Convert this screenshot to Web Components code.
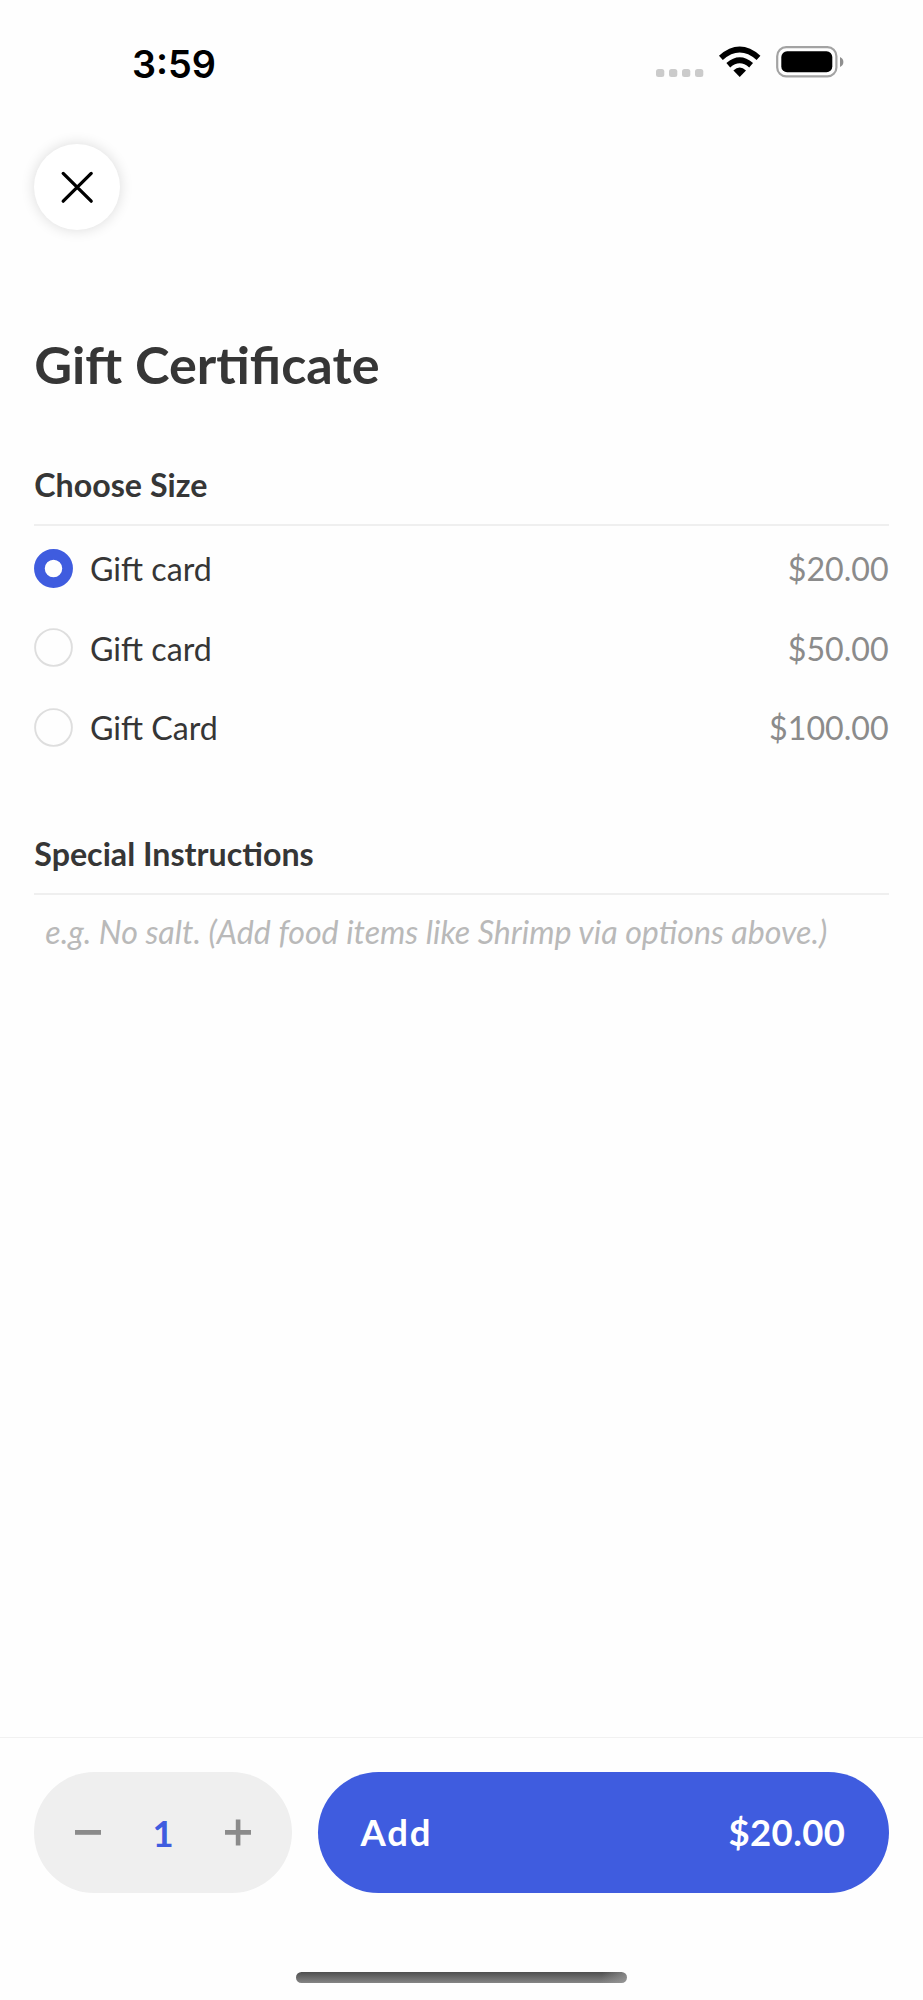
<!DOCTYPE html>
<html lang="en">
<head>
<meta charset="utf-8">
<title>Gift Certificate</title>
<style>
html,body{margin:0;height:2000px;background:#fefefe}
body{font-family:Lato,sans-serif;color:#363636;overflow:hidden}
</style>
</head>
<body>
<item-screen></item-screen>
<script>
function define(name, html) {
  const t = document.createElement('template');
  t.innerHTML = html;
  customElements.define(name, class extends HTMLElement {
    constructor() {
      super();
      this.attachShadow({mode: 'open'}).appendChild(t.content.cloneNode(true));
    }
  });
}

define('status-bar', `
<style>
:host{display:flex;height:144px;justify-content:space-between;align-items:flex-start;box-sizing:border-box;padding:40px 79.5px 0 132px;color:#000}
.time{padding-top:1px;font:600 37.8px/46px Inter,sans-serif}
svg{display:block}
</style>
<span class="time"><slot></slot></span>
<svg width="190" height="46" viewBox="653 40 190 46">
  <g fill="#cbcbcb"><rect x="655" y="69" width="8.3" height="8" rx="2.5"/><rect x="668" y="69" width="8.3" height="8" rx="2.5"/><rect x="681" y="69" width="8.3" height="8" rx="2.5"/><rect x="694" y="69" width="8.3" height="8" rx="2.5"/></g>
  <path d="M738.7 77 L732.4 70.4 Q738.7 64.8 745 70.4Z"/>
  <path d="M727.3 65.2 Q738.7 55.2 750.1 65.2" fill="none" stroke="#000" stroke-width="5.8"/>
  <path d="M719.9 57.8 Q738.7 41.2 757.5 57.8" fill="none" stroke="#000" stroke-width="5.8"/>
  <rect x="776.2" y="47.2" width="59.2" height="29.2" rx="9" fill="none" stroke="#a3a3a3" stroke-width="2.2"/>
  <rect x="780.3" y="51.3" width="51" height="21" rx="5.8"/>
  <path d="M839 57 Q842.4 58.6 842.4 62 Q842.4 65.4 839 67Z" fill="#8f8f8f"/>
</svg>`);

define('close-button', `
<style>
:host{display:flex;width:86px;height:86px;border-radius:50%;background:#fff;box-shadow:0 0 14px rgba(0,0,0,.14);align-items:center;justify-content:center}
svg{display:block}
</style>
<svg width="34" height="34" viewBox="0 0 34 34"><path d="M3.2 3.4 31.2 31.2M31.2 3.4 3.2 31.2" stroke="#000" stroke-width="3.3" stroke-linecap="round"/></svg>`);

define('section-heading', `
<style>:host{display:block;height:40px;padding-bottom:20px;border-bottom:2px solid #efefef;font-size:32.2px;font-weight:700;line-height:42px}</style>
<slot></slot>`);

define('option-row', `
<style>
:host{display:flex;height:79.4px;align-items:center;font-size:32.2px;line-height:40px}
svg{display:block;margin-right:16.6px}
circle{fill:none;stroke:#dedede;stroke-width:1.9;r:18.4px}
:host([checked]) circle{stroke:#3f5cdf;stroke-width:10.7;r:14.1px}
.label{flex:1;padding-top:2px}
.price{padding-top:2px;color:#8b8b8b}
</style>
<svg width="39" height="39" viewBox="0 0 39 39"><circle cx="19.5" cy="19.5"/></svg>
<span class="label"><slot></slot></span><span class="price"><slot name="price"></slot></span>`);

define('quantity-stepper', `
<style>
:host{display:flex;box-sizing:border-box;width:257.6px;height:120.6px;border-radius:61px;background:#efefef;align-items:center;justify-content:space-between;padding:0 40.5px;font-size:36.5px;font-weight:700;color:#3f5cdf}
svg{display:block}
span{padding-top:2px}
</style>
<svg width="26" height="26"><path d="M0 13.4H26" stroke="#8b8b8b" stroke-width="4.8"/></svg>
<span><slot></slot></span>
<svg width="26" height="27"><path d="M0 13.4H26M13.1 .4V26.4" stroke="#8b8b8b" stroke-width="4.6"/></svg>`);

define('add-button', `
<style>
:host{display:flex;flex:1;box-sizing:border-box;height:120.6px;border-radius:61px;background:#3f5cdf;align-items:center;justify-content:space-between;padding:0 43.5px 0 43px;font-size:36.5px;font-weight:700;color:#fff}
.action{letter-spacing:1.8px}
.total{letter-spacing:.35px}
</style>
<span class="action"><slot></slot></span><span class="total"><slot name="total"></slot></span>`);

define('bottom-bar', `
<style>
:host{display:flex;flex-direction:column;box-sizing:border-box;height:263px;margin-top:auto;border-top:1px solid #f1f1f1;align-items:center}
.row{display:flex;align-self:stretch;gap:25.7px;padding:34.2px 34.3px 0}
.home{width:330.5px;height:11px;border-radius:6px;margin-top:79.2px;background:linear-gradient(100deg,transparent 92%,#a0a0a0aa),linear-gradient(#4e4e4e,#858585)}
</style>
<div class="row"><slot></slot></div><div class="home"></div>`);

define('item-screen', `
<style>
:host{display:flex;flex-direction:column;height:2000px}
main{padding:0 34.3px}
h1{margin:103px 0 69px;font-size:52.2px;line-height:62px;font-weight:700}
.options{padding:2.8px 0 66.2px}
.hint{margin-top:17.3px;padding-left:11px;font-size:32.2px;line-height:40px;font-style:italic;color:#b9b9b9;white-space:nowrap}
</style>
<status-bar>3:59</status-bar>
<main>
  <close-button></close-button>
  <h1>Gift Certificate</h1>
  <section-heading>Choose Size</section-heading>
  <div class="options">
    <option-row checked>Gift card<span slot="price">$20.00</span></option-row>
    <option-row>Gift card<span slot="price">$50.00</span></option-row>
    <option-row>Gift Card<span slot="price">$100.00</span></option-row>
  </div>
  <section-heading>Special Instructions</section-heading>
  <div class="hint">e.g. No salt. (Add food items like Shrimp via options above.)</div>
</main>
<bottom-bar>
  <quantity-stepper>1</quantity-stepper>
  <add-button>Add<span slot="total">$20.00</span></add-button>
</bottom-bar>`);
</script>
</body>
</html>
